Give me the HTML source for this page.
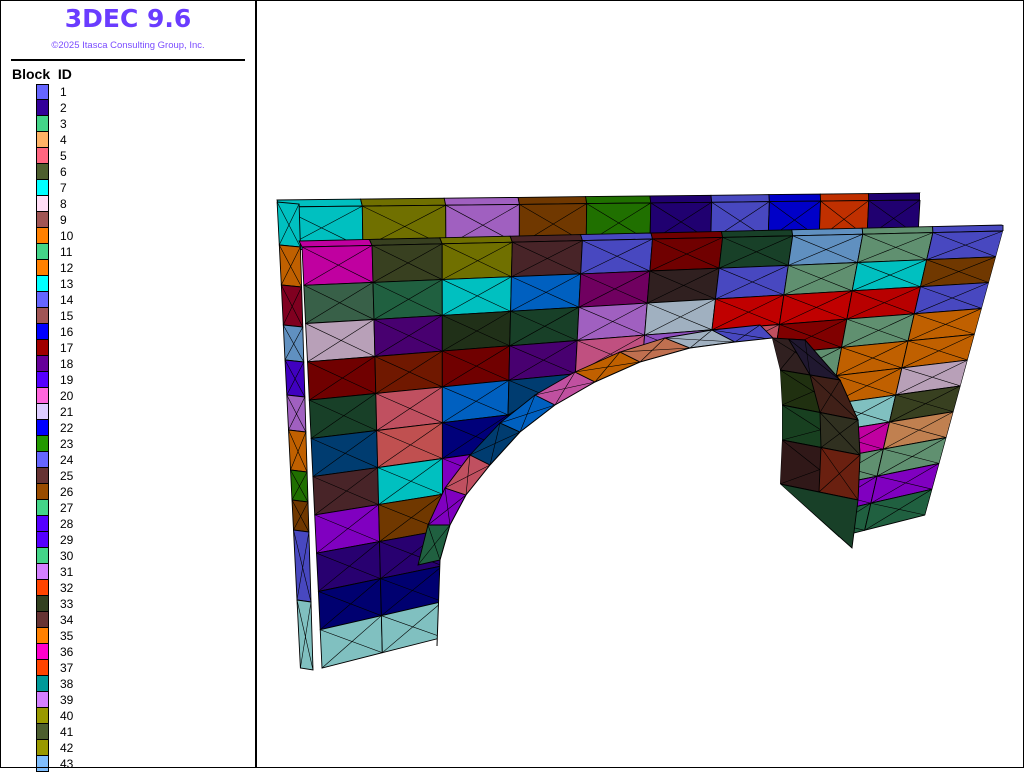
<!DOCTYPE html>
<html><head><meta charset="utf-8">
<style>
html,body{margin:0;padding:0;background:#fff;}
body{width:1024px;height:768px;position:relative;overflow:hidden;font-family:"Liberation Sans",sans-serif;}
#frame{position:absolute;left:0;top:0;width:1022px;height:766px;border:1px solid #000;z-index:5;}
#vline{position:absolute;left:255px;top:0;width:2px;height:768px;background:#000;z-index:5;}
#title{position:absolute;left:0;width:256px;top:4px;text-align:center;font-size:25px;font-weight:bold;color:#6a3cff;font-family:"DejaVu Sans","Liberation Sans",sans-serif;}
#copy{position:absolute;left:0;width:256px;top:40px;text-align:center;font-size:9.5px;color:#7a4cff;}
#hline{position:absolute;left:11px;top:59px;width:234px;height:2px;background:#000;}
#bid{position:absolute;left:12px;top:66px;font-size:14px;font-weight:bold;color:#000;}
.sw{position:absolute;left:36px;width:11px;height:15px;border:1px solid #000;border-top:none;}
.num{position:absolute;left:60px;font-size:12px;color:#000;}
svg{position:absolute;left:0;top:0;}
</style></head><body>
<div id="frame"></div>
<div id="vline"></div>
<div id="title">3DEC 9.6</div>
<div id="copy">©2025 Itasca Consulting Group, Inc.</div>
<div id="hline"></div>
<div id="bid">Block&nbsp; ID</div>
<div id="legend"></div>
<svg id="s" width="1024" height="768" viewBox="0 0 1024 768"></svg>
<script>
var lc=["#6666ff","#330099","#44d488","#ffb366","#ff6680","#4d5e2e","#00ffff","#ffddf5","#a05555","#ff8000","#44d488","#ff8000","#00ffff","#6666ff","#a05555","#0000ff","#a00000","#660099","#5500ff","#ff66dd","#ddccff","#0000ff","#229900","#6666ff","#663333","#994c00","#44d488","#5500ff","#5500ff","#44d488","#d480ff","#ff4400","#334020","#663333","#ff8000","#ff00cc","#ff4400","#009999","#d480ff","#999900","#4d5e2e","#999900","#80bfff"];
var h="";
for(var i=0;i<lc.length;i++){var t=84+16*i;h+='<div class="sw" style="top:'+t+'px;background:'+lc[i]+';'+(i==0?'border-top:1px solid #000;height:14px;':'')+'"></div><div class="num" style="top:'+(t+1)+'px">'+(i+1)+'</div>';}
document.getElementById('legend').innerHTML=h;

var s="";
function poly(pts,fill,diag){
  var p=pts.map(function(a){return a[0].toFixed(1)+","+a[1].toFixed(1)}).join(" ");
  s+='<polygon points="'+p+'" fill="'+fill+'" stroke="#000" stroke-width="0.9"/>';
  if(diag&&pts.length==4){
    s+='<line x1="'+pts[0][0]+'" y1="'+pts[0][1]+'" x2="'+pts[2][0]+'" y2="'+pts[2][1]+'" stroke="#000" stroke-width="0.6"/>';
    s+='<line x1="'+pts[1][0]+'" y1="'+pts[1][1]+'" x2="'+pts[3][0]+'" y2="'+pts[3][1]+'" stroke="#000" stroke-width="0.6"/>';
  }
}
function lerp(a,b,t){return [a[0]+(b[0]-a[0])*t,a[1]+(b[1]-a[1])*t];}
function bil(TL,TR,BL,BR,u,v){return lerp(lerp(TL,TR,u),lerp(BL,BR,u),v);}

// back beam
var bTL=[279,207],bTR=[920,200],bBL=[280,250],bBR=[918,236];
var cT0=[277,200],cT1=[920,193];
var bc=["#00c0c0","#707000","#a060c0","#703800","#207000","#200070","#4848c0","#0000c8","#c03000","#200070"];
var bx=[0,0.13,0.26,0.375,0.48,0.58,0.675,0.765,0.845,0.92,1];
for(var c=0;c<10;c++){poly([lerp(cT0,cT1,bx[c]),lerp(cT0,cT1,bx[c+1]),bil(bTL,bTR,bBL,bBR,bx[c+1],0),bil(bTL,bTR,bBL,bBR,bx[c],0)],bc[c],false);}
for(var c=0;c<10;c++){poly([bil(bTL,bTR,bBL,bBR,bx[c],0),bil(bTL,bTR,bBL,bBR,bx[c+1],0),bil(bTL,bTR,bBL,bBR,bx[c+1],1),bil(bTL,bTR,bBL,bBR,bx[c],1)],bc[c],true);}

// left side face
var sc=["#00c0c0","#c06000","#800020","#6090c0","#4000c0","#a060c0","#c06000","#207000","#703800","#4848c0","#80c0c0"];
var sy=[202,245,285,325,360,395,430,470,500,530,600,668];
function lx(y){return 277+(y-200)*0.05;}
for(var i=0;i<sy.length-1;i++){var y0=sy[i],y1=sy[i+1];var w0=22-(y0-200)*0.02,w1=22-(y1-200)*0.02;poly([[lx(y0),y0],[lx(y0)+w0,y0+2],[lx(y1)+w1,y1+2],[lx(y1),y1]],sc[i],true);}

// front face
var TL=[302,247],TR=[1003,231],BL=[322,668],BR=[925,515];
var f0=[299,241],f1=[1003,225];
var rows=[
["#c000a0","#384020","#707000","#482428","#4848c0","#700000","#184028","#6090c0","#609070","#4848c0"],
["#386048","#206040","#00c0c0","#0060c0","#700060","#302020","#4848c0","#609070","#00c0c0","#703800"],
["#b8a0b8","#480070","#203018","#184028","#a060c0","#a0b0c0","#c00000","#c00000","#b80000","#4848c0"],
["#700000","#701800","#700000","#480070","#c05080","#9050c0","#c05060","#800000","#609070","#c06000"],
["#184028","#c05060","#0060c0","#003c70","#006040","#c050a0","#c050a0","#609070","#c06000","#c06000"],
["#003c70","#c05050","#00007a","#c05060","#2a2a2a","#4848c0","#c050a0","#c000a0","#c06000","#b8a0b8"],
["#482428","#00c0c0","#8000c0","#302020","#201010","#c00000","#c00000","#384020","#80c0c0","#384020"],
["#8000c0","#703800","#206040","#301818","#201010","#302020","#402018","#c000a0","#c000a0","#c08050"],
["#280070","#280070","#280070","#203018","#202020","#302020","#304030","#304030","#609070","#609070"],
["#000070","#000070","#100040","#100040","#201010","#402010","#480070","#8000c0","#8000c0","#8000c0"],
["#80c0c0","#80c0c0","#184028","#184028","#184028","#184028","#184028","#184028","#206040","#206040"]];
var R=rows.length,C=10;
for(var c=0;c<C;c++){poly([lerp(f0,f1,c/C),lerp(f0,f1,(c+1)/C),bil(TL,TR,BL,BR,(c+1)/C,0),bil(TL,TR,BL,BR,c/C,0)],rows[0][c],false);}
for(var r=0;r<R;r++)for(var c=0;c<C;c++){
  poly([bil(TL,TR,BL,BR,c/C,r/R),bil(TL,TR,BL,BR,(c+1)/C,r/R),bil(TL,TR,BL,BR,(c+1)/C,(r+1)/R),bil(TL,TR,BL,BR,c/C,(r+1)/R)],rows[r][c],true);
}

// voussoir ring
var outer=[[418,565],[428,525],[445,488],[470,455],[500,423],[535,395],[575,372],[620,352],[665,338],[712,330],[760,325]];
var inner=[[440,560],[450,525],[466,495],[490,465],[520,432],[555,405],[595,382],[640,362],[690,348],[735,342],[775,340]];
var vc=["#206040","#8000c0","#c05060","#003c70","#0060c0","#c050a0","#c06000","#c07050","#a0b0c0","#4848c0","#6090c0"];
for(var i=0;i<outer.length-1;i++){poly([outer[i],outer[i+1],inner[i+1],inner[i]],vc[i],true);}

// right pier inner face
var pc=["#302020","#203010","#184020","#301818","#201830","#402018","#303020","#6a2010","#0a0a50","#402030","#184028"];
var pl=[[772,338],[780,370],[782,405],[782,440],[780,484]];
var pr=[[805,340],[840,380],[858,420],[860,455],[858,500]];
for(var i=0;i<pl.length-1;i++){poly([pl[i],pr[i],pr[i+1],pl[i+1]],pc[i],true);}
for(var i=0;i<pl.length-1;i++){var m0=lerp(pl[i],pr[i],0.5),m1=lerp(pl[i+1],pr[i+1],0.5);poly([m0,pr[i],pr[i+1],m1],pc[i+4],true);}
poly([[780,484],[858,500],[852,548]],"#184028",true);

// opening white
s+='<polygon points="437,768 437,646 440,560 450,525 466,495 490,465 520,432 555,405 595,382 640,362 690,348 735,342 772,338 780,370 782,405 782,440 780,484 852,549 852,768" fill="#fff"/>';
s+='<polyline points="437,646 440,560 450,525 466,495 490,465 520,432 555,405 595,382 640,362 690,348 735,342 772,338" fill="none" stroke="#000" stroke-width="1"/>';
s+='<polygon points="322,669 437,646 437,768 300,768" fill="#fff"/>';
s+='<polygon points="852,549 925,516 1003,231 1024,231 1024,768 852,768" fill="#fff"/>';
s+='<polygon points="920,193 1024,150 1024,224 1003,225 920,200" fill="#fff"/>';
document.getElementById('s').innerHTML=s;
</script>
</body></html>
